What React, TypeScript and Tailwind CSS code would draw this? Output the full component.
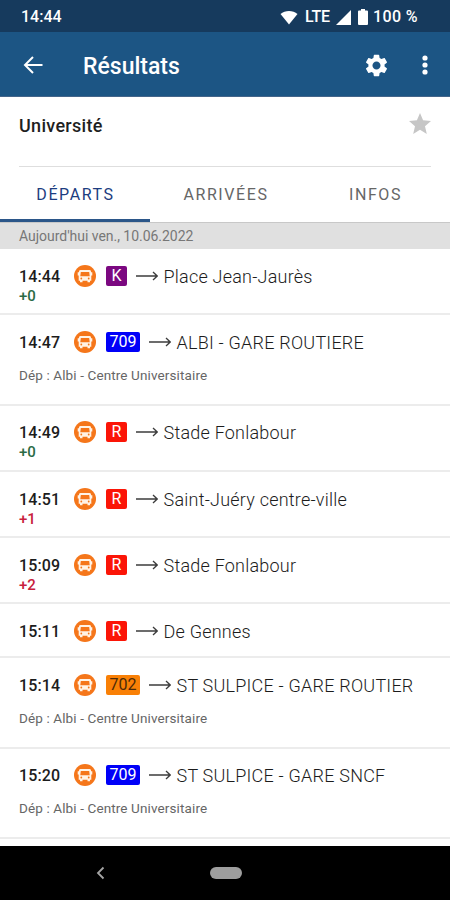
import clsx from "clsx";

type Departure = {
  time: string;
  delay?: string;
  late?: boolean;
  line: string;
  lineClass: string;
  direction: string;
  from?: string;
  rowClass: string;
};

const departures: Departure[] = [
  {
    time: "14:44",
    delay: "+0",
    line: "K",
    lineClass: "w-[21px] bg-[#7b0880] text-white",
    direction: "Place Jean-Jaurès",
    rowClass: "h-[66px] pt-4",
  },
  {
    time: "14:47",
    line: "709",
    lineClass: "w-[34px] bg-[#0000f8] text-white",
    direction: "ALBI - GARE ROUTIERE",
    from: "Dép : Albi - Centre Universitaire",
    rowClass: "h-[91px] pt-4",
  },
  {
    time: "14:49",
    delay: "+0",
    line: "R",
    lineClass: "w-[21px] bg-[#fb1507] text-white",
    direction: "Stade Fonlabour",
    rowClass: "h-[66px] pt-[15px]",
  },
  {
    time: "14:51",
    delay: "+1",
    late: true,
    line: "R",
    lineClass: "w-[21px] bg-[#fb1507] text-white",
    direction: "Saint-Juéry centre-ville",
    rowClass: "h-[66px] pt-4",
  },
  {
    time: "15:09",
    delay: "+2",
    late: true,
    line: "R",
    lineClass: "w-[21px] bg-[#fb1507] text-white",
    direction: "Stade Fonlabour",
    rowClass: "h-[66px] pt-4",
  },
  {
    time: "15:11",
    line: "R",
    lineClass: "w-[21px] bg-[#fb1507] text-white",
    direction: "De Gennes",
    rowClass: "h-[54px] pt-4",
  },
  {
    time: "15:14",
    line: "702",
    lineClass: "w-[34px] bg-[#f98006] text-[#4d2a08]",
    direction: "ST SULPICE - GARE ROUTIER",
    from: "Dép : Albi - Centre Universitaire",
    rowClass: "h-[91px] pt-4",
  },
  {
    time: "15:20",
    line: "709",
    lineClass: "w-[34px] bg-[#0000f8] text-white",
    direction: "ST SULPICE - GARE SNCF",
    from: "Dép : Albi - Centre Universitaire",
    rowClass: "h-[90px] pt-[15px]",
  },
];

const BusIcon = () => (
  <svg width="22" height="22" viewBox="0 0 22 22" className="shrink-0">
    <circle cx="11" cy="11" r="11" fill="#f5761a" />
    <path
      d="M6.500 4.900h9q1.200 0 1.400 1.200l.2 1.100h1.200v3.300h-1v5.200h-1.300v1.500h-2.500v-1.500h-5v1.500H6v-1.500H4.700v-5.200h-1V7.200h1.200l.2-1.100q.2-1.200 1.400-1.200z"
      fill="#fff3e6"
    />
    <path d="M6.800 6.900h8.400l.500 4.300H6.300z" fill="#f5761a" />
    <circle cx="7.300" cy="13.500" r="0.900" fill="#f5761a" />
    <circle cx="14.700" cy="13.500" r="0.900" fill="#f5761a" />
  </svg>
);

const LongArrow = () => (
  <svg
    width="22"
    height="10"
    viewBox="0 0 22 10"
    fill="none"
    stroke="#3c3c3c"
    strokeWidth="1.300"
    className="shrink-0"
  >
    <path d="M0 5h21M17 1l4.200 4L17 9" />
  </svg>
);

const StatusBar = () => (
  <div className="flex h-8 items-center justify-between bg-[#163a5d] pt-0.5 pl-[21px] pr-[31px] text-white">
    <span className="text-base font-medium">14:44</span>
    <div className="flex items-center">
      <svg width="18" height="15" viewBox="0 0 18 15" fill="#fff">
        <path d="M9 14.500 0.500 4C5 0 13 0 17.500 4z" />
      </svg>
      <span className="ml-[7px] w-[27px] text-base font-medium tracking-[-0.2px] whitespace-nowrap">
        LTE
      </span>
      <svg width="15" height="15" viewBox="0 0 15 15" fill="#fff" className="ml-1">
        <path d="M15 0v15H0z" />
      </svg>
      <svg width="10" height="16" viewBox="0 0 10 16" fill="#fff" className="ml-[7px]">
        <path d="M3 0h4v1.500h2q1 0 1 1V15q0 1-1 1H1q-1 0-1-1V2.500q0-1 1-1h2z" />
      </svg>
      <span className="ml-[5px] w-[46px] text-base font-medium tracking-[0.4px] whitespace-nowrap">
        100 %
      </span>
    </div>
  </div>
);

const AppBar = () => (
  <header className="flex h-[65px] items-center border-b border-[#44658a] bg-[#1c5584] pt-0.5 pl-[23px] pr-[22px] text-white">
    <svg
      width="20"
      height="18"
      viewBox="0 0 20 18"
      fill="none"
      stroke="#fff"
      strokeWidth="2"
    >
      <path d="M10 1 2 9l8 8M2 9h17.500" />
    </svg>
    <h1 className="ml-[40px] grow pt-1 text-[23px] font-medium">Résultats</h1>
    <svg width="27" height="27" viewBox="0 0 24 24" fill="#fff">
      <path d="M19.140 12.940c.040-.300.060-.610.060-.940 0-.320-.020-.640-.070-.940l2.030-1.580c.180-.140.230-.410.120-.610l-1.920-3.320c-.120-.220-.370-.290-.590-.220l-2.390.960c-.500-.380-1.030-.700-1.620-.940l-.360-2.540c-.040-.240-.240-.410-.480-.410h-3.840c-.240 0-.430.170-.470.410l-.360 2.540c-.590.240-1.130.570-1.620.940l-2.390-.960c-.220-.080-.470 0-.590.220L2.740 8.870c-.120.210-.080.470.120.610l2.030 1.580c-.050.300-.090.630-.090.940s.020.640.070.940l-2.030 1.580c-.180.140-.230.410-.120.610l1.920 3.320c.120.220.370.290.590.220l2.390-.960c.500.380 1.030.700 1.620.940l.360 2.540c.050.240.240.410.480.410h3.840c.240 0 .440-.170.470-.410l.360-2.540c.590-.240 1.130-.560 1.620-.940l2.390.960c.220.080.470 0 .590-.220l1.920-3.320c.120-.220.070-.470-.120-.610l-2.010-1.580zM12 15.600c-1.980 0-3.600-1.620-3.600-3.600s1.620-3.600 3.600-3.600 3.600 1.620 3.600 3.600-1.620 3.600-3.600 3.600z" />
    </svg>
    <svg width="6" height="20" viewBox="0 0 6 20" fill="#fff" className="ml-[32px]">
      <circle cx="3" cy="3" r="2.600" />
      <circle cx="3" cy="10" r="2.600" />
      <circle cx="3" cy="17" r="2.600" />
    </svg>
  </header>
);

const DepartureRow = ({ item }: { item: Departure }) => (
  <li className={clsx("border-b-2 border-[#ececec] px-[19px]", item.rowClass)}>
    <div className="flex h-[22px] items-center">
      <span className="w-[55px] pt-px text-base font-medium tracking-[0.1px] text-[#1c1c1c]">
        {item.time}
      </span>
      <BusIcon />
      <span
        className={clsx(
          "mr-[9px] ml-[10px] flex h-5 shrink-0 items-center justify-center rounded-xs text-base leading-none",
          item.lineClass
        )}
      >
        {item.line}
      </span>
      <LongArrow />
      <span className="ml-[5.500px] pt-px text-lg font-light tracking-[0.22px] whitespace-nowrap text-[#1c1c1c]">
        {item.direction}
      </span>
    </div>
    {item.delay && (
      <div
        className={clsx(
          "text-[15px] leading-[18px] font-medium",
          item.late ? "text-[#c8203c]" : "text-[#2a6b45]"
        )}
      >
        {item.delay}
      </div>
    )}
    {item.from && (
      <div className="mt-3 text-[13.5px] leading-5 tracking-[0.12px] text-[#666666]">
        {item.from}
      </div>
    )}
  </li>
);

const App = () => {
  return (
    <div className="flex h-[900px] w-[450px] flex-col overflow-hidden bg-white font-['Roboto',sans-serif]">
      <StatusBar />
      <AppBar />
      <section className="mx-[19px] flex h-[70px] items-start justify-between border-b border-[#dedede] pt-[15px]">
        <h2 className="text-lg leading-7 font-medium tracking-[0.3px] text-[#1f1f1f]">
          Université
        </h2>
        <svg width="22" height="21" viewBox="2 2 20 19" fill="#c6c6c6" className="mt-px">
          <path d="M12 17.270 18.180 21l-1.640-7.030L22 9.240l-7.190-.610L12 2 9.190 8.630 2 9.240l5.460 4.730L5.820 21z" />
        </svg>
      </section>
      <nav className="grid h-[55px] shrink-0 grid-cols-3 text-center text-base tracking-[1.6px] text-[#666666]">
        <span className="h-[55px] border-b-[3px] border-[#2b5689] pt-4 pl-px text-[#1c3d80]">
          DÉPARTS
        </span>
        <span className="pt-4 pl-0.5">ARRIVÉES</span>
        <span className="pt-4 pl-px">INFOS</span>
      </nav>
      <div className="h-[27px] border-t border-[#c8c8c8] bg-[#e0e0e0] px-[19px] text-sm leading-[26px] tracking-[-0.03px] text-[#777777]">
        Aujourd'hui ven., 10.06.2022
      </div>
      <ul className="h-[597px] overflow-hidden">
        {departures.map((item) => (
          <DepartureRow key={item.time} item={item} />
        ))}
      </ul>
      <footer className="flex h-[54px] shrink-0 items-center bg-black pl-[96px]">
        <svg
          width="9"
          height="14"
          viewBox="0 0 9 14"
          fill="none"
          stroke="#a5a5a5"
          strokeWidth="1.800"
        >
          <path d="M7.500 1.500 2 7l5.500 5.500" />
        </svg>
        <div className="ml-[105px] h-3 w-8 rounded-full bg-[#9e9e9e]" />
      </footer>
    </div>
  );
};

export default App;
